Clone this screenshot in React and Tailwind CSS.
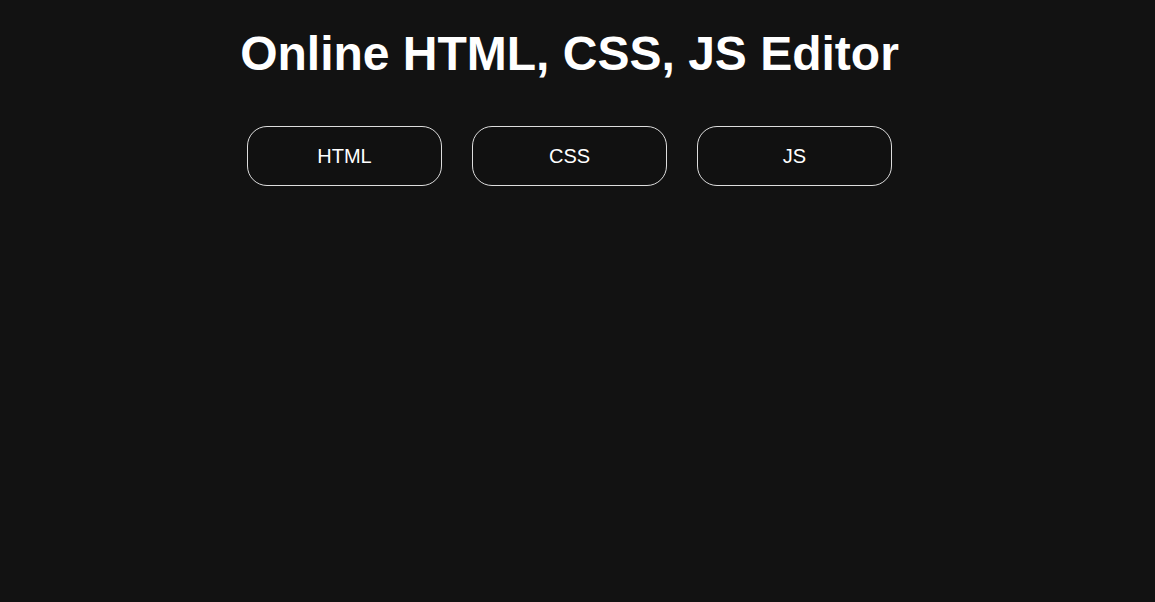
export default function App() {
  const tabs = ['HTML', 'CSS', 'JS']
  return (
    <div className="min-h-screen bg-[#121212] pr-[16px] text-white font-['Liberation_Sans',Arial,sans-serif]">
      <h1 className="pt-[24px] text-center text-[48px] font-bold leading-[60px]">
        Online HTML, CSS, JS Editor
      </h1>
      <div className="mt-[42px] flex justify-center gap-[30px]">
        {tabs.map((t) => (
          <button
            key={t}
            className="h-[60px] w-[195px] rounded-[20px] border border-[#ddd] bg-[#111] text-[20px] text-white"
          >
            {t}
          </button>
        ))}
      </div>
    </div>
  )
}
